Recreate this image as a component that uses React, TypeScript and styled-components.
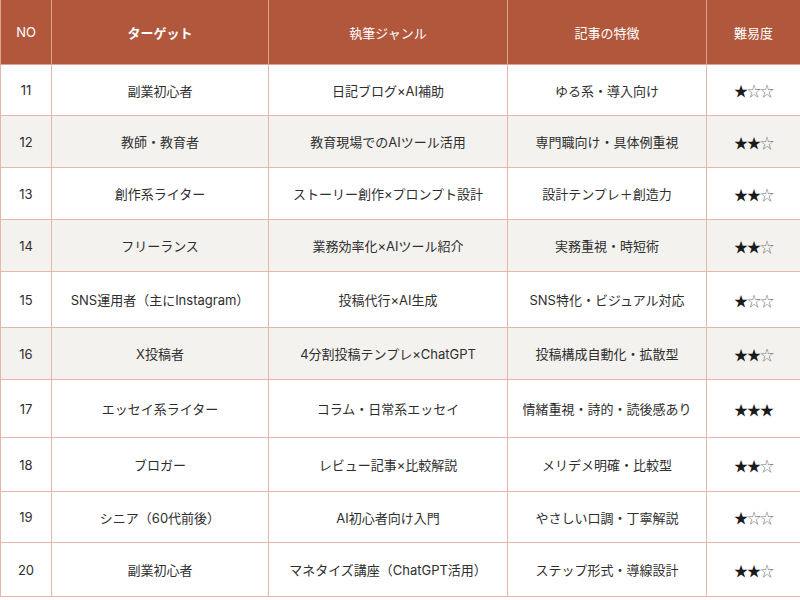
import React from "react";
import styled, { createGlobalStyle } from "styled-components";

const GlobalStyle = createGlobalStyle`
  html, body {
    margin: 0;
    padding: 0;
    background: #ffffff;
  }
  body {
    font-family: Inter, "Noto Sans CJK JP", sans-serif;
    color: #333333;
  }
`;

const Table = styled.table`
  width: 800px;
  border-collapse: collapse;
  table-layout: fixed;
  font-size: 13px;
`;

const HeadCell = styled.th<{ $bold?: boolean }>`
  height: 64px;
  padding: 0;
  background: #b1583c;
  color: #ffffff;
  font-weight: ${(p) => (p.$bold ? 700 : 400)};
  text-align: center;
  border: 1px solid #d9a593;
  border-top: none;
`;

const Row = styled.tr<{ $shaded: boolean; $h: number }>`
  height: ${(p) => p.$h}px;
  background: ${(p) => (p.$shaded ? "#f4f2ee" : "#ffffff")};
`;

const Cell = styled.td`
  padding: 0;
  text-align: center;
  border: 1px solid #e3b7aa;
  color: #2e2e2e;
`;

const Stars = styled.span`
  font-family: "Noto Sans CJK JP", sans-serif;
  font-size: 14px;
  letter-spacing: -1px;
`;

const Filled = styled.span`
  color: #1a1a1a;
`;

const Empty = styled.span`
  color: #7a7a7a;
`;

type Item = {
  no: number;
  target: string;
  genre: string;
  feature: string;
  level: number;
  h: number;
};

const items: Item[] = [
  { no: 11, target: "副業初心者", genre: "日記ブログ×AI補助", feature: "ゆる系・導入向け", level: 1, h: 51 },
  { no: 12, target: "教師・教育者", genre: "教育現場でのAIツール活用", feature: "専門職向け・具体例重視", level: 2, h: 52 },
  { no: 13, target: "創作系ライター", genre: "ストーリー創作×プロンプト設計", feature: "設計テンプレ＋創造力", level: 2, h: 52 },
  { no: 14, target: "フリーランス", genre: "業務効率化×AIツール紹介", feature: "実務重視・時短術", level: 2, h: 52 },
  { no: 15, target: "SNS運用者（主にInstagram）", genre: "投稿代行×AI生成", feature: "SNS特化・ビジュアル対応", level: 1, h: 56 },
  { no: 16, target: "X投稿者", genre: "4分割投稿テンプレ×ChatGPT", feature: "投稿構成自動化・拡散型", level: 2, h: 52 },
  { no: 17, target: "エッセイ系ライター", genre: "コラム・日常系エッセイ", feature: "情緒重視・詩的・読後感あり", level: 3, h: 58 },
  { no: 18, target: "ブロガー", genre: "レビュー記事×比較解説", feature: "メリデメ明確・比較型", level: 2, h: 54 },
  { no: 19, target: "シニア（60代前後）", genre: "AI初心者向け入門", feature: "やさしい口調・丁寧解説", level: 1, h: 51 },
  { no: 20, target: "副業初心者", genre: "マネタイズ講座（ChatGPT活用）", feature: "ステップ形式・導線設計", level: 2, h: 54 },
];

function Rating({ level }: { level: number }) {
  return (
    <Stars>
      <Filled>{"★".repeat(level)}</Filled>
      <Empty>{"☆".repeat(3 - level)}</Empty>
    </Stars>
  );
}

export default function App() {
  return (
    <>
      <GlobalStyle />
      <Table>
        <colgroup>
          <col style={{ width: 51 }} />
          <col style={{ width: 217 }} />
          <col style={{ width: 239 }} />
          <col style={{ width: 199 }} />
          <col style={{ width: 94 }} />
        </colgroup>
        <thead>
          <tr>
            <HeadCell>NO</HeadCell>
            <HeadCell $bold>ターゲット</HeadCell>
            <HeadCell>執筆ジャンル</HeadCell>
            <HeadCell>記事の特徴</HeadCell>
            <HeadCell>難易度</HeadCell>
          </tr>
        </thead>
        <tbody>
          {items.map((it) => (
            <Row key={it.no} $shaded={it.no === 12 || it.no === 14 || it.no === 16} $h={it.h}>
              <Cell>{it.no}</Cell>
              <Cell>{it.target}</Cell>
              <Cell>{it.genre}</Cell>
              <Cell>{it.feature}</Cell>
              <Cell>
                <Rating level={it.level} />
              </Cell>
            </Row>
          ))}
        </tbody>
      </Table>
    </>
  );
}
